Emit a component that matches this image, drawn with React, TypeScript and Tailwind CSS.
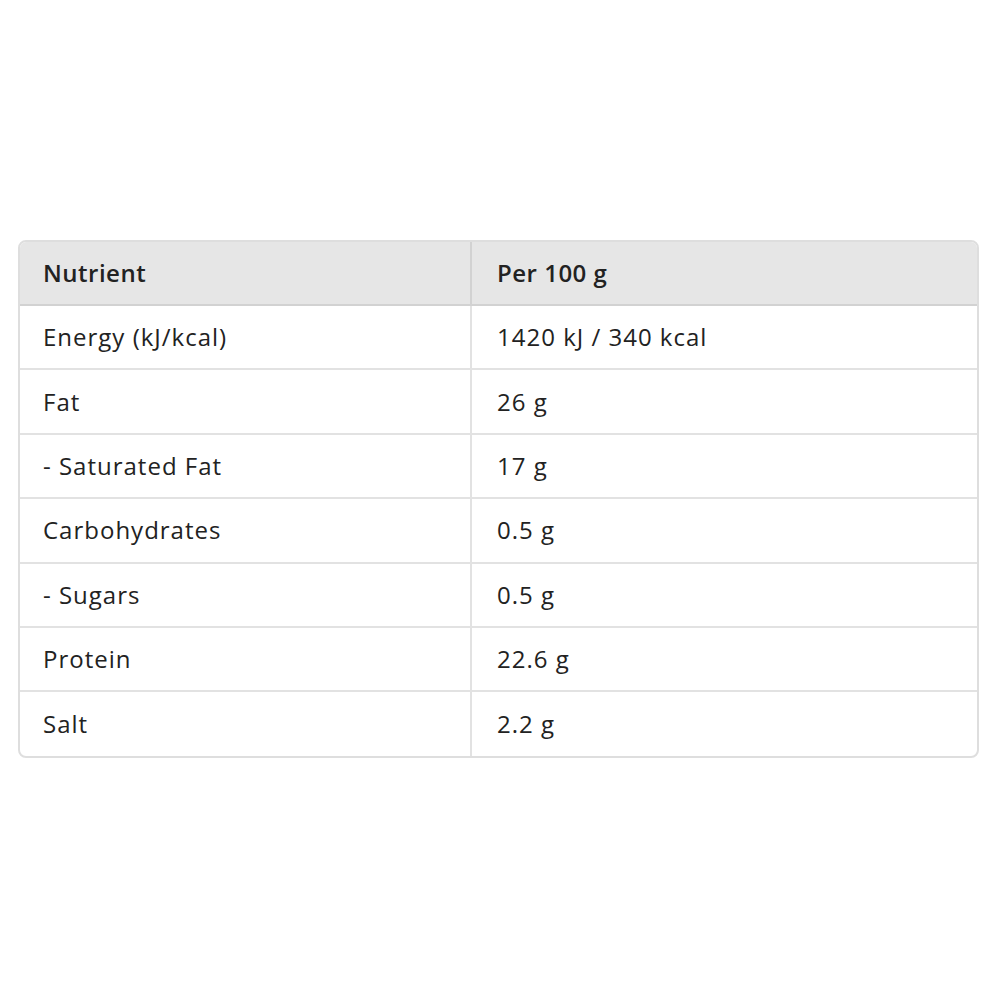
const rows: [string, string][] = [
	["Energy (kJ/kcal)", "1420 kJ / 340 kcal"],
	["Fat", "26 g"],
	["- Saturated Fat", "17 g"],
	["Carbohydrates", "0.5 g"],
	["- Sugars", "0.5 g"],
	["Protein", "22.6 g"],
	["Salt", "2.2 g"],
];

export default function App() {
	return (
		<div className="min-h-screen bg-white pt-[240px] pl-[18px] font-['Open_Sans','Noto_Sans',sans-serif] text-[#222]">
			<div className="w-[961px] overflow-hidden rounded-[8px] border-2 border-[#dedede]">
				<table className="w-full border-collapse text-[24px]">
					<thead className="tracking-[0.5px]">
						<tr className="h-[63px] bg-[#e6e6e6]">
							<th className="w-[451px] border-r-2 border-b-2 border-[#d2d2d2] px-[23px] text-left font-semibold">Nutrient</th>
							<th className="border-b-2 border-[#d2d2d2] px-[25px] text-left font-semibold">Per 100 g</th>
						</tr>
					</thead>
					<tbody className="tracking-[1px]">
						{rows.map(([name, value], i) => (
							<tr key={name} className={`h-[64.4px] ${i < rows.length - 1 ? "border-b-2 border-[#e2e2e2]" : ""}`}>
								<td className="border-r-2 border-[#e2e2e2] px-[23px]">{name}</td>
								<td className="px-[25px]">{value}</td>
							</tr>
						))}
					</tbody>
				</table>
			</div>
		</div>
	);
}
